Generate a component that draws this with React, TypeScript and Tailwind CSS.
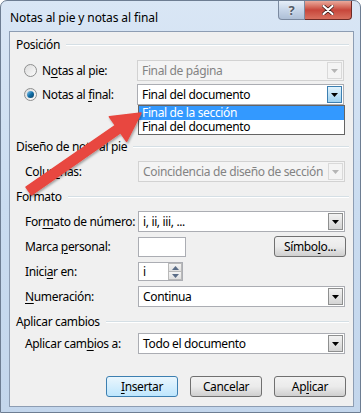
import React from 'react';

const Acc: React.FC<{ children: React.ReactNode }> = ({ children }) => (
  <span className="underline decoration-1 underline-offset-2">{children}</span>
);

const DownArrow: React.FC<{ color?: string }> = ({ color = '#000' }) => (
  <svg width="7" height="4" viewBox="0 0 7 4">
    <path d="M0 0 H7 L3.5 4 Z" fill={color} />
  </svg>
);

const Header: React.FC<{ title: string; className?: string }> = ({ title, className = '' }) => (
  <div className={`flex items-center h-[14px] pl-[6px] pr-[4px] ${className}`}>
    <span className="whitespace-nowrap">{title}</span>
    <div className="flex-1 ml-[6px] h-[2px] border-t border-[#d5dfe5] border-b-white border-b"></div>
  </div>
);

const Combo: React.FC<{
  value: string;
  disabled?: boolean;
  focused?: boolean;
  className?: string;
}> = ({ value, disabled, focused, className = 'w-[207px]' }) => (
  <div
    className={`h-[21px] flex items-center border ${
      disabled ? 'border-[#d2d2d2] bg-[#f4f4f4] text-[#838383]' : 'border-[#abadb3] bg-white'
    } ${className}`}
  >
    <span className="pl-[4px] flex-1 whitespace-nowrap">{value}</span>
    <div
      className={`w-[15px] h-[17px] mr-[1px] shrink-0 flex items-center justify-center border ${
        disabled
          ? 'border-[#d9d9d9] bg-[#f4f4f4]'
          : focused
          ? 'border-[#3c7fb1] bg-gradient-to-b from-[#e3f3fc] to-[#9dd1f1]'
          : 'border-[#8e8f8f] bg-gradient-to-b from-[#f2f2f2] to-[#d4d4d4]'
      }`}
    >
      <DownArrow color={disabled ? '#b5b5b5' : '#000'} />
    </div>
  </div>
);

const Radio: React.FC<{ checked?: boolean }> = ({ checked }) => (
  <div className="w-[13px] h-[13px] rounded-full border border-[#8e8f8f] bg-gradient-to-br from-[#dcdcdc] to-[#fbfbfb] flex items-center justify-center">
    {checked && (
      <div className="w-[7px] h-[7px] rounded-full bg-gradient-to-br from-[#8bd2f6] via-[#0f6fa8] to-[#0c3f63]"></div>
    )}
  </div>
);

const Btn: React.FC<{ children: React.ReactNode; primary?: boolean; className?: string }> = ({
  children,
  primary,
  className = '',
}) => (
  <div
    className={`w-[72px] h-[21px] rounded-[3px] flex items-center justify-center border ${
      primary
        ? 'border-[#3c7fb1] bg-gradient-to-b from-[#eaf6fd] to-[#bee6fd]'
        : 'border-[#707070] bg-gradient-to-b from-[#f2f2f2] via-[#ebebeb] to-[#cfcfcf]'
    } ${className}`}
  >
    {children}
  </div>
);

const Row: React.FC<{ label: React.ReactNode; children: React.ReactNode; className?: string }> = ({
  label,
  children,
  className = '',
}) => (
  <div className={`flex items-center h-[21px] pl-[15px] pr-[7px] ${className}`}>
    <div className="w-[113px] whitespace-nowrap">{label}</div>
    {children}
  </div>
);

export default function App() {
  return (
    <div className="relative w-[361px] h-[413px] font-['Noto_Sans','DejaVu_Sans',sans-serif] text-[12px] leading-[14px] text-black tracking-[-0.35px] rounded-t-[7px] border border-[#6d7d92] bg-gradient-to-b from-[#d9e6f5] via-[#cadcf0] to-[#c3d6ec] flex flex-col overflow-hidden">
      {/* title bar */}
      <div className="h-[30px] flex items-start">
        <span className="ml-[9px] mt-[10px] text-[12px] tracking-[-0.1px]">Notas al pie y notas al final</span>
        <div className="ml-auto mr-[8px] flex">
          <div className="w-[27px] h-[19px] rounded-bl-[4px] border border-t-0 border-[#7b8aa0] bg-gradient-to-b from-[#e6eef8] via-[#c6d5e8] to-[#aebfd6] flex items-center justify-center">
            <span className="text-[13px] font-bold text-[#525a66] [text-shadow:0_0_2px_#fff]">?</span>
          </div>
          <div className="w-[47px] h-[19px] rounded-br-[4px] border border-l-0 border-t-0 border-[#6e2b26] bg-gradient-to-b from-[#e9a99c] via-[#c7463b] to-[#d8705f] flex items-center justify-center">
            <svg width="12" height="10" viewBox="0 0 12 10">
              <path
                d="M1.5 1 L10.5 9 M10.5 1 L1.5 9"
                stroke="#3a1a18"
                strokeWidth="3.6"
                strokeLinecap="round"
              />
              <path
                d="M1.5 1 L10.5 9 M10.5 1 L1.5 9"
                stroke="#ffffff"
                strokeWidth="2.2"
                strokeLinecap="round"
              />
            </svg>
          </div>
        </div>
      </div>

      {/* client area */}
      <div className="ml-[8px] mr-[6px] h-[376px] border border-[#8d9db3] bg-[#f0f0f0] flex flex-col">
        <Header title="Posición" className="mt-[6px]" />

        <div className="relative flex items-center h-[21px] pl-[14px] pr-[7px] mt-[8px]">
          <Radio />
          <span className="ml-[5px] w-[95px] whitespace-nowrap">
            N<Acc>o</Acc>tas al pie:
          </span>
          <Combo value="Final de página" disabled />
        </div>

        <div className="relative flex items-center h-[21px] pl-[14px] pr-[7px] mt-[3px]">
          <Radio checked />
          <span className="ml-[5px] w-[95px] whitespace-nowrap">
            Notas al <Acc>f</Acc>inal:
          </span>
          <Combo value="Final del documento" focused />
          <div className="absolute left-[128px] top-[21px] w-[207px] h-[30px] border border-[#646464] bg-white z-10 flex flex-col">
            <div className="h-[14px] bg-[#3399ff] text-white pl-[3px] leading-[14px]">Final de la sección</div>
            <div className="h-[14px] pl-[3px] leading-[14px]">Final del documento</div>
          </div>
        </div>

        <Header title="Diseño de nota al pie" className="mt-[35px]" />

        <Row className="mt-[7px]" label={<>Colu<Acc>m</Acc>nas:</>}>
          <Combo value="Coincidencia de diseño de sección" disabled />
        </Row>

        <Header title="Formato" className="mt-[8px]" />

        <Row className="mt-[7px]" label={<>For<Acc>m</Acc>ato de número:</>}>
          <Combo value="i, ii, iii, ..." />
        </Row>

        <Row className="mt-[4px]" label={<>Marca <Acc>p</Acc>ersonal:</>}>
          <div className="w-[48px] h-[20px] border border-[#abadb3] bg-white"></div>
          <Btn className="ml-auto">
            Símbo<Acc>l</Acc>o...
          </Btn>
        </Row>

        <Row className="mt-[4px]" label={<>Inici<Acc>a</Acc>r en:</>}>
          <div className="w-[45px] h-[19px] border border-[#abadb3] bg-white flex items-stretch">
            <span className="pl-[4px] flex-1 leading-[17px]">i</span>
            <div className="w-[14px] flex flex-col">
              <div className="flex-1 border border-[#b9b9b9] bg-gradient-to-b from-[#f4f4f4] to-[#e0e0e0] flex items-center justify-center">
                <svg width="7" height="4" viewBox="0 0 7 4">
                  <path d="M0 4 H7 L3.5 0 Z" fill="#5a6c86" />
                </svg>
              </div>
              <div className="flex-1 border border-t-0 border-[#b9b9b9] bg-gradient-to-b from-[#f4f4f4] to-[#e0e0e0] flex items-center justify-center">
                <DownArrow color="#5a6c86" />
              </div>
            </div>
          </div>
        </Row>

        <Row className="mt-[4px]" label={<><Acc>N</Acc>umeración:</>}>
          <Combo value="Continua" />
        </Row>

        <Header title="Aplicar cambios" className="mt-[8px]" />

        <Row className="mt-[4px]" label={<>Aplicar cam<Acc>b</Acc>ios a:</>}>
          <Combo value="Todo el documento" />
        </Row>

        <div className="flex justify-end gap-[12px] pr-[7px] mt-[22px]">
          <Btn primary>
            <Acc>I</Acc>nsertar
          </Btn>
          <Btn>Cancelar</Btn>
          <Btn>
            Ap<Acc>l</Acc>icar
          </Btn>
        </div>
      </div>

      {/* red annotation arrow */}
      <svg
        className="absolute left-0 top-0 pointer-events-none z-20"
        width="361"
        height="413"
        viewBox="0 0 361 413"
      >
        <defs>
          <filter id="sh" x="-10%" y="-10%" width="130%" height="130%">
            <feDropShadow dx="1" dy="1.5" stdDeviation="1.2" floodColor="#000" floodOpacity="0.35" />
          </filter>
        </defs>
        <polygon
          points="25,186 114.4,124.3 108.4,115.7 140,112 125.6,140.3 119.6,131.7 30.6,194"
          fill="#e8473f"
          stroke="#e8473f"
          strokeWidth="1.5"
          strokeLinejoin="round"
          filter="url(#sh)"
        />
      </svg>
    </div>
  );
}
